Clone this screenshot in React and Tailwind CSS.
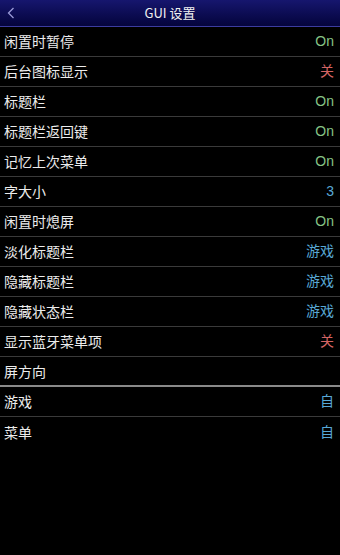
const font = { fontFamily: '"Noto Sans CJK SC", "Liberation Sans", sans-serif' };

const green = "text-[#86c486]";
const red = "text-[#d46464]";
const blue = "text-[#58a8d6]";

const rows = [
  { label: "闲置时暂停", value: "On", color: green },
  { label: "后台图标显示", value: "关", color: red },
  { label: "标题栏", value: "On", color: green },
  { label: "标题栏返回键", value: "On", color: green },
  { label: "记忆上次菜单", value: "On", color: green },
  { label: "字大小", value: "3", color: blue },
  { label: "闲置时熄屏", value: "On", color: green },
  { label: "淡化标题栏", value: "游戏", color: blue },
  { label: "隐藏标题栏", value: "游戏", color: blue },
  { label: "隐藏状态栏", value: "游戏", color: blue },
  { label: "显示蓝牙菜单项", value: "关", color: red },
];

const orientation = [
  { label: "游戏", value: "自", color: blue },
  { label: "菜单", value: "自", color: blue },
];

function Row({ label, value, color, border = "border-b border-[#3a3a3a]" }) {
  return (
    <div className={`flex h-[30px] items-center justify-between pl-[4px] pr-[6px] ${border}`}>
      <span className="text-[14px] text-[#ececec]">{label}</span>
      {value && (
        <span
          className={`text-[14px] ${color}`}
          style={{ fontFamily: '"Liberation Sans", "Noto Sans CJK SC", sans-serif' }}
        >
          {value}
        </span>
      )}
    </div>
  );
}

export default function App() {
  return (
    <div className="h-[555px] w-[340px] bg-black" style={font}>
      <div className="relative flex h-[27px] items-center justify-center border-b border-[#3c3ca0] bg-gradient-to-b from-[#16166e] to-[#05053c]">
        <svg className="absolute left-[7px] top-[7px]" width="8" height="12" viewBox="0 0 8 12">
          <path d="M6.5 1 L1.5 6 L6.5 11" stroke="#9a9ad8" strokeWidth="1.3" fill="none" />
        </svg>
        <span className="text-[13px] text-[#f2f2f2]">GUI 设置</span>
      </div>
      {rows.map((r) => (
        <Row key={r.label} {...r} />
      ))}
      <Row label="屏方向" border="border-b-2 border-[#8a8a8a]" />
      <Row {...orientation[0]} />
      <Row {...orientation[1]} border="" />
    </div>
  );
}
